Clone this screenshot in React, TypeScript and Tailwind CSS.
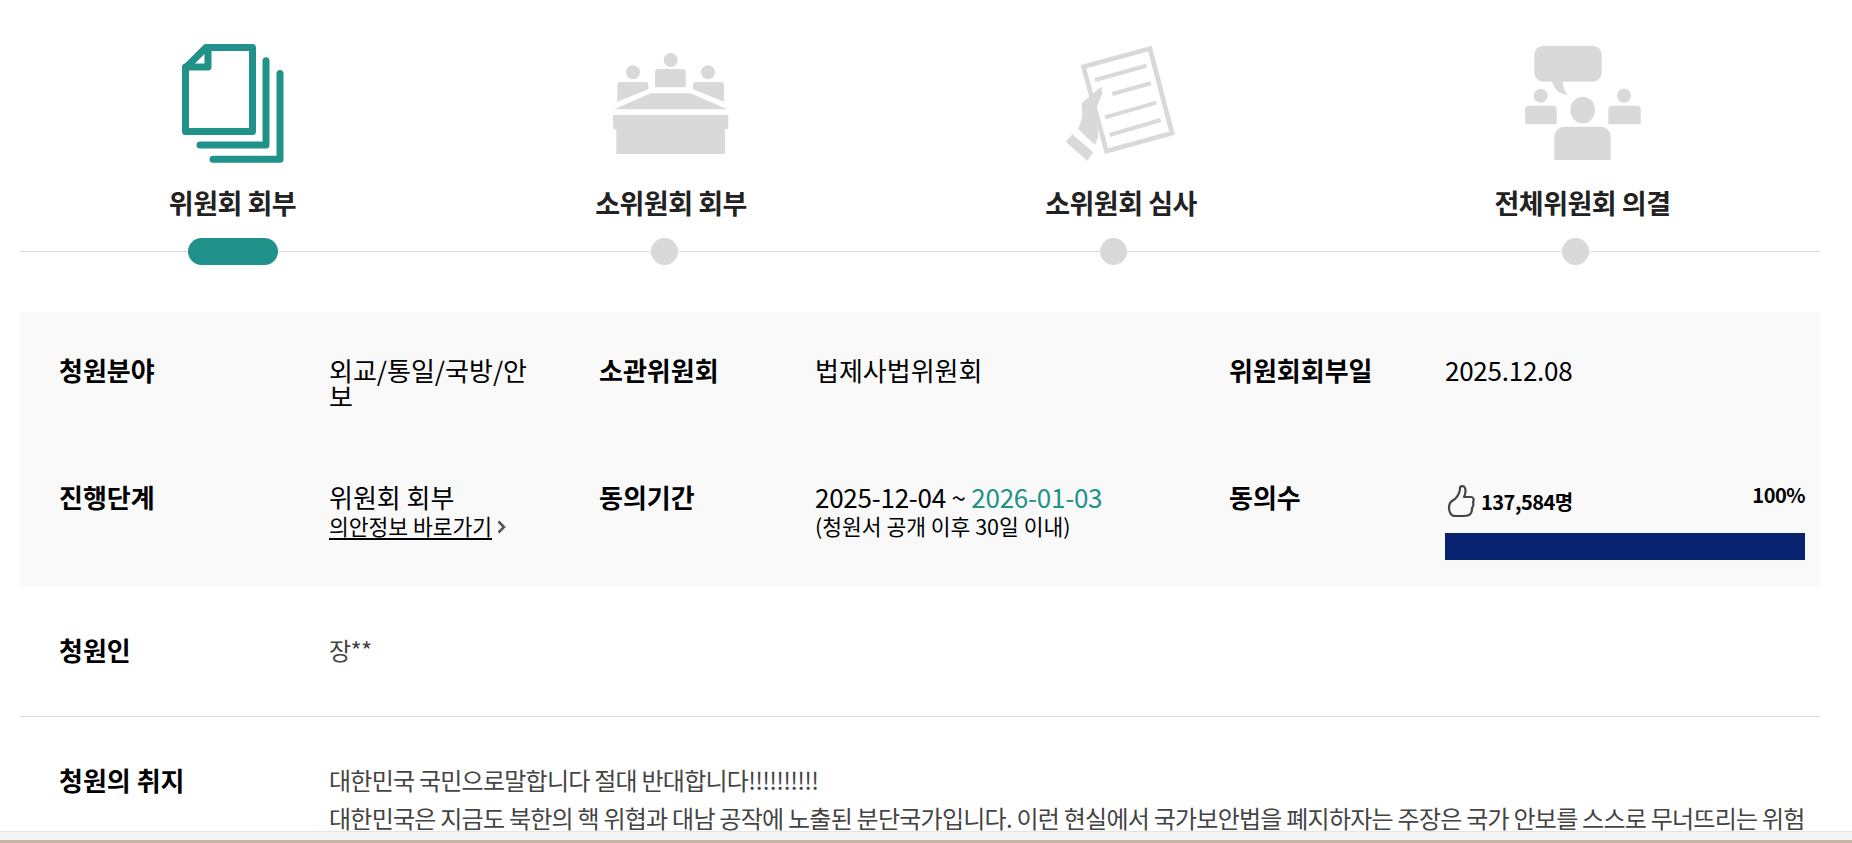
const font = "font-['Noto_Sans_CJK_KR','Noto_Sans',sans-serif]";

const steps = [
  { label: "위원회 회부", icon: <DocsIcon />, col: "w-[425px]" },
  { label: "소위원회 회부", icon: <MeetingIcon />, col: "w-[452px]" },
  { label: "소위원회 심사", icon: <ReviewIcon />, col: "w-[448px]" },
  { label: "전체위원회 의결", icon: <DiscussIcon />, col: "w-[475px]" },
];

function DocsIcon() {
  return (
    <svg width="103" height="120" viewBox="0 0 103 120" fill="none" stroke="#219289" strokeWidth="7" strokeLinejoin="round" strokeLinecap="round">
      <path d="M4.5 24 L25 3.5 H71.5 V87.5 H4.5 Z" />
      <path d="M27 3.5 V23 H4.5" />
      <path d="M19 101 H85 V16.7" />
      <path d="M32 115.3 H99 V29.5" />
    </svg>
  );
}

function MeetingIcon() {
  return (
    <svg width="116" height="120" viewBox="0 0 116 120" fill="#d9d9d9">
      <circle cx="57.7" cy="16" r="7" />
      <circle cx="20" cy="28.3" r="7" />
      <circle cx="95" cy="28.3" r="7" />
      <path d="M42 28 a3 3 0 0 1 3-3 H69.7 a3 3 0 0 1 3 3 V43.3 H42 Z" />
      <path d="M4.3 41 a3 3 0 0 1 3-3 H32.3 a3 3 0 0 1 3 3 V45.3 L4.3 57.7 Z" />
      <path d="M111 41 a3 3 0 0 0 -3-3 H83 a3 3 0 0 0 -3 3 V45.3 L111 57.7 Z" />
      <path d="M37.7 49.3 H77.7 L114.3 65.3 H1 Z" />
      <path d="M0 71 H115.3 V85.3 H112 V110 H3.3 V85.3 H0 Z" />
    </svg>
  );
}

function ReviewIcon() {
  return (
    <svg width="112" height="120" viewBox="0 0 112 120" fill="none" stroke="#d9d9d9">
      <path d="M18.5 22.8 L85 4.6 L107 89.2 L41.5 107 Z" strokeWidth="4.7" />
      <path d="M30 36 L81.3 21.7 M47.3 50 L85.7 39.3 M40 73.3 L91.3 58.7 M44.7 91 L95.7 76" strokeWidth="4" />
      <path d="M36.3 42.7 L37.3 49.3 L31.3 64.3 L33.3 92.7 L30 101 L13.3 85.3 L17.3 72.7 L16.7 59.3 L24 52.7 Z" fill="#d9d9d9" stroke="none" />
      <path d="M7.3 90.3 L28.3 108.3 L22.3 116.7 L0.7 97.7 Z" fill="#d9d9d9" stroke="none" />
    </svg>
  );
}

function DiscussIcon() {
  return (
    <svg width="116" height="120" viewBox="0 0 116 120" fill="#d9d9d9">
      <rect x="9.3" y="1.7" width="67.4" height="36" rx="9" />
      <path d="M26.7 36 C28 44 34 50 42.7 51 C39 47 37.7 42 37.7 36 Z" />
      <circle cx="15.7" cy="51.7" r="7" />
      <circle cx="99" cy="51.7" r="7" />
      <ellipse cx="57.7" cy="66" rx="12.3" ry="13.3" />
      <path d="M0 65.7 a4 4 0 0 1 4-4 H27.7 a4 4 0 0 1 4 4 V80.3 H0 Z" />
      <path d="M83.3 65.7 a4 4 0 0 1 4-4 H111.7 a4 4 0 0 1 4 4 V80.3 H83.3 Z" />
      <path d="M29.3 92.7 a10 10 0 0 1 10-10 H75.7 a10 10 0 0 1 10 10 V116 H29.3 Z" />
    </svg>
  );
}

function ThumbIcon() {
  return (
    <svg className="ml-[2px]" width="28" height="33" viewBox="0 0 28 33" fill="none" stroke="#444" strokeWidth="2.2" strokeLinejoin="round" strokeLinecap="round">
      <path d="M8 14 C11 11 13 7 13 3 C13 1 17 0 18 3 C19 6 18 10 17 12 H24 C27 12 27 15 26 17 C27 19 26 22 25 23 C25 26 24 29 22 30 C20 31 18 31 16 31 H8 C4 31 2 27 2 22 C2 18 4 16 8 14 Z" />
    </svg>
  );
}

function Step({ label, icon, col }: (typeof steps)[number]) {
  return (
    <div className={`${col} flex flex-col items-center`}>
      <div className="h-[120px]">{icon}</div>
      <div className="mt-[20px] text-[27px] font-bold leading-[38px] tracking-[-0.5px] text-[#222]">{label}</div>
    </div>
  );
}

function Dot({ active }: { active: boolean }) {
  return active ? <span className="h-[27px] w-[90px] rounded-[14px] bg-[#219289]" /> : <span className="h-[27px] w-[27px] rounded-full bg-[#d9d9d9]" />;
}

export default function App() {
  return (
    <div className={`${font} flex h-[843px] flex-col overflow-hidden bg-white text-black`}>
      <div className="min-h-0 flex-1 overflow-hidden pl-5 pr-8">
        {/* steps */}
        <div className="flex pt-[44px]">
          {steps.map((s) => (
            <Step key={s.label} {...s} />
          ))}
        </div>
        <div className="relative mt-[16px] h-[27px]">
          <div className="absolute inset-x-0 top-[13px] h-px bg-[#dddddd]" />
          <div className="relative flex items-center pl-[168px]">
            <Dot active />
            <span className="w-[373px]" />
            <Dot active={false} />
            <span className="w-[422px]" />
            <Dot active={false} />
            <span className="w-[435px]" />
            <Dot active={false} />
          </div>
        </div>

        {/* summary panel */}
        <div className="mt-[47px] h-[274px] bg-[#f9f9f9] pt-[45px] pl-[39px] pr-[15px]">
          <div className="grid grid-cols-[270px_270px_216px_414px_216px_360px] text-[26px] leading-[26px]">
            <div className="h-[127px] font-bold">청원분야</div>
            <div className="w-[210px]">외교/통일/국방/안보</div>
            <div className="font-bold">소관위원회</div>
            <div>법제사법위원회</div>
            <div className="font-bold">위원회회부일</div>
            <div className="tracking-[-0.25px]">2025.12.08</div>

            <div className="font-bold">진행단계</div>
            <div>
              <div>위원회 회부</div>
              <div className="mt-[4px] flex items-center gap-[5px] text-[21.5px] leading-[26px]">
                <a className="border-b-2 border-black leading-[24px]">의안정보 바로가기</a>
                <svg width="9" height="14" viewBox="0 0 9 14" fill="none" stroke="#555" strokeWidth="2.5"><path d="M1.5 1.5 L7 7 L1.5 12.5" /></svg>
              </div>
            </div>
            <div className="font-bold">동의기간</div>
            <div>
              <div className="tracking-[-0.25px]">2025-12-04 ~ <span className="text-[#219289]">2026-01-03</span></div>
              <div className="mt-[3px] text-[21.5px]">(청원서 공개 이후 30일 이내)</div>
            </div>
            <div className="font-bold">동의수</div>
            <div>
              <div className="flex items-start justify-between">
                <div className="flex items-center gap-[6px] pt-[1px]">
                  <ThumbIcon />
                  <span className="text-[20px] font-bold tracking-[-0.5px]">137,584명</span>
                </div>
                <span className="-mt-[2px] text-[20px] font-bold tracking-[-0.5px]">100%</span>
              </div>
              <div className="mt-[15px] h-[27px] bg-[#08236f]" />
            </div>
          </div>
        </div>

        {/* petitioner */}
        <div className="flex h-[131px] items-center border-b border-[#dddddd] pl-[39px] pb-[3px]">
          <div className="w-[270px] text-[26px] font-bold">청원인</div>
          <div className="text-[24px] tracking-[-0.7px] text-[#444]">장**</div>
        </div>

        {/* purpose */}
        <div className="flex pt-[44px] pl-[39px] pr-[15px]">
          <div className="w-[270px] shrink-0 text-[26px] font-bold leading-[38px]">청원의 취지</div>
          <div className="text-[24px] leading-[38px] tracking-[-0.75px] whitespace-nowrap text-[#444]">
            <p>대한민국 국민으로말합니다 절대 반대합니다!!!!!!!!!!</p>
            <p>대한민국은 지금도 북한의 핵 위협과 대남 공작에 노출된 분단국가입니다. 이런 현실에서 국가보안법을 폐지하자는 주장은 국가 안보를 스스로 무너뜨리는 위험</p>
          </div>
        </div>
      </div>
      <div className="h-[12px] shrink-0 border-t border-[#e4e4e4] bg-[#f5f5f5]">
        <div className="mt-[8px] h-[3px] bg-[#c9b5a6]" />
      </div>
    </div>
  );
}
